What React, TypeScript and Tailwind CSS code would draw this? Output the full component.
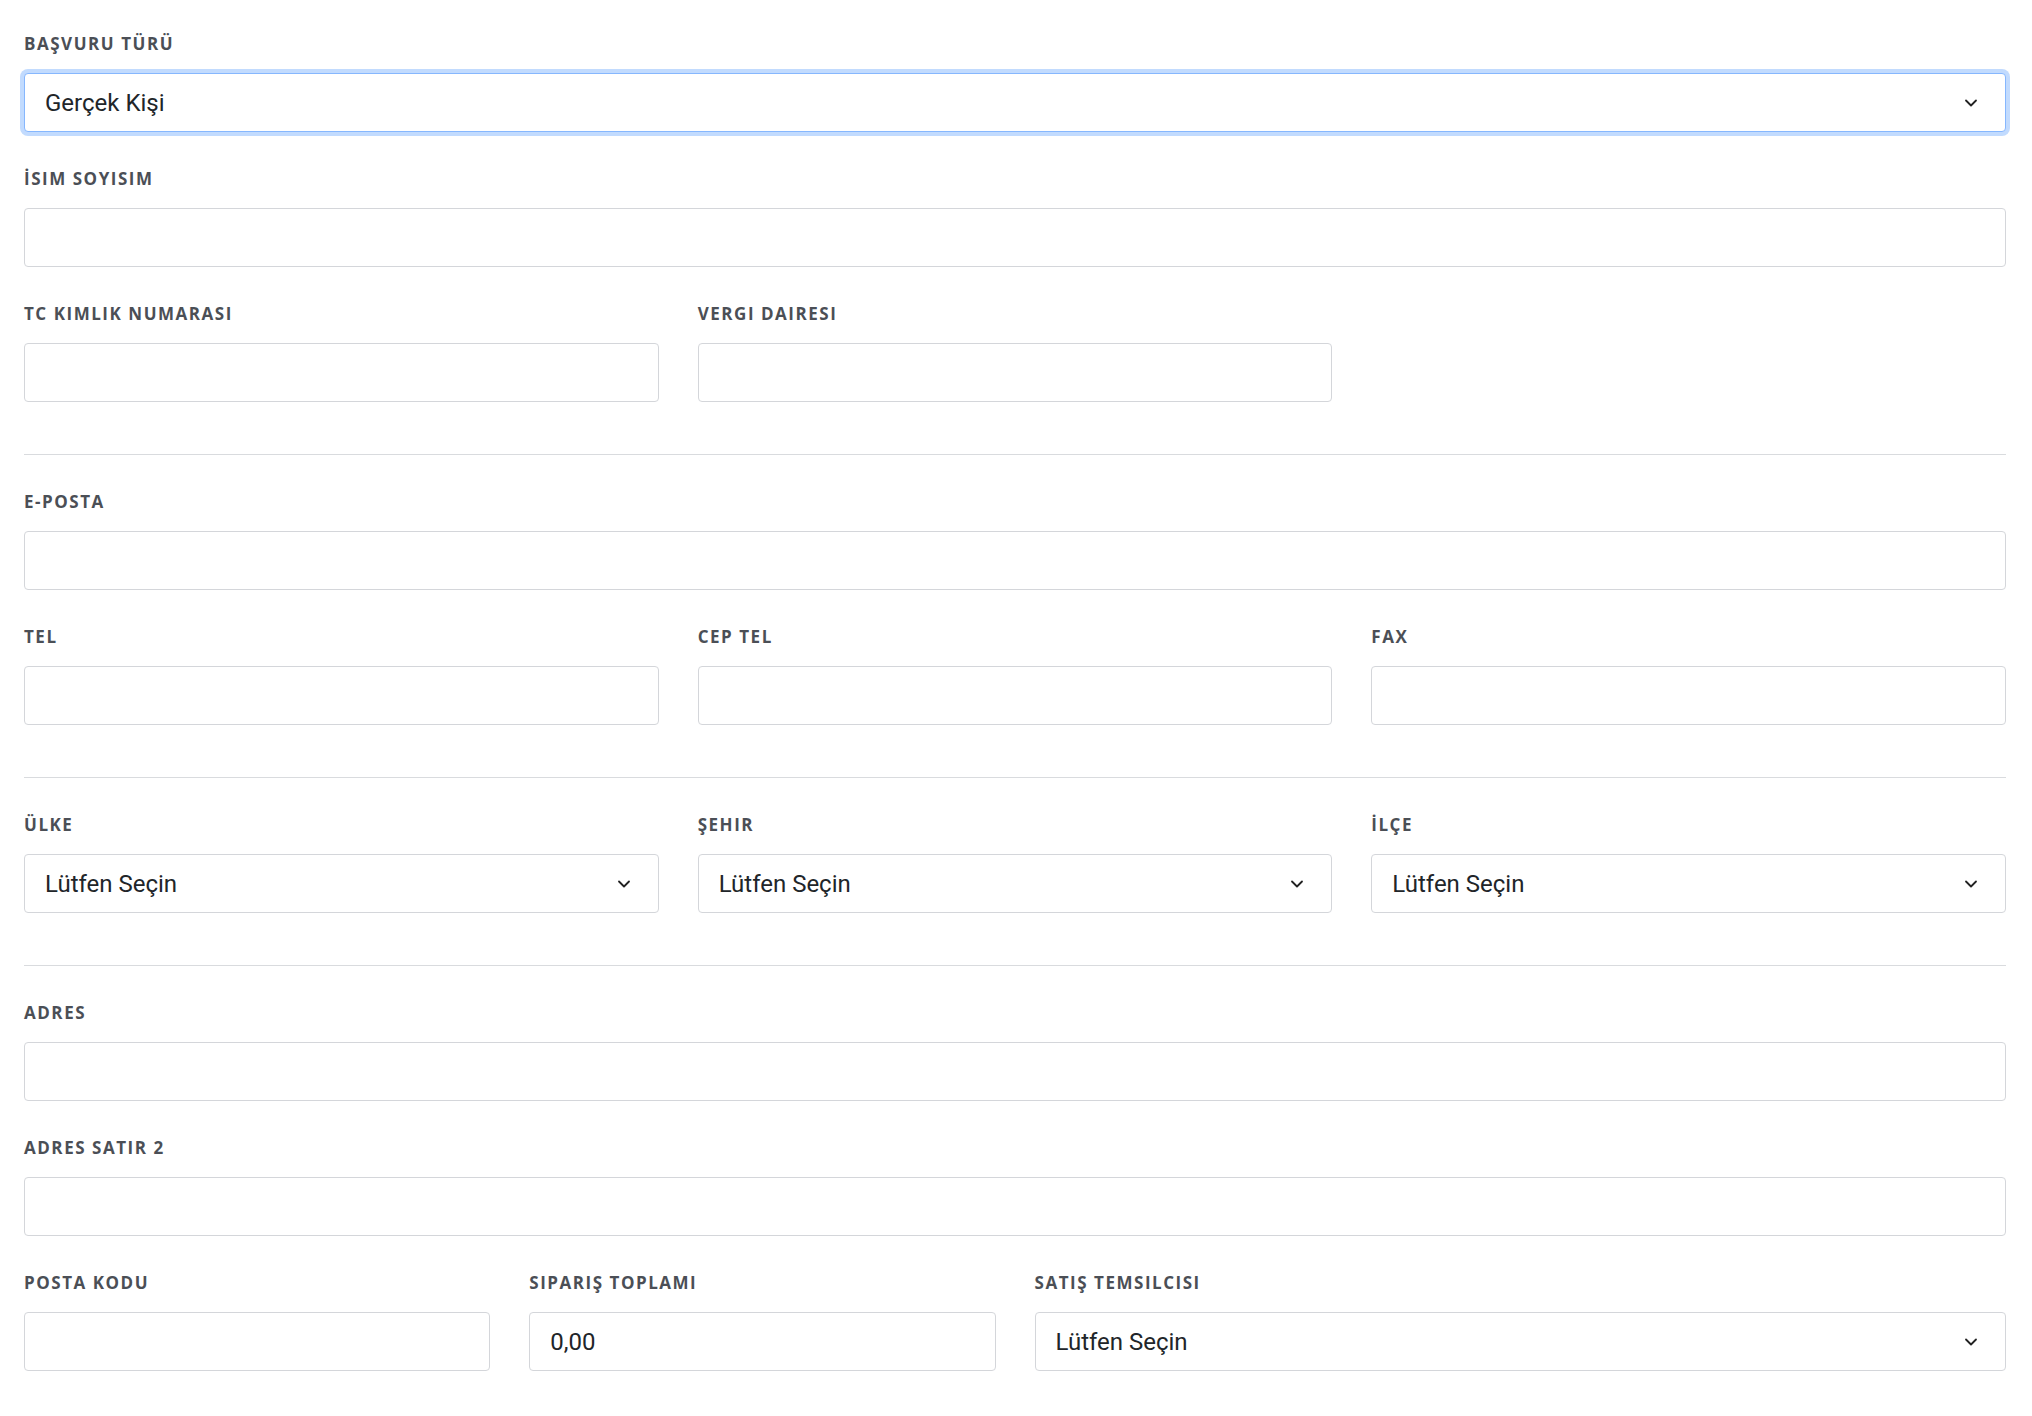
import React from "react";

const Label = ({ children }: { children: React.ReactNode }) => (
  <div className="text-[17px] font-bold tracking-[0.09em] text-[#4b4f56] leading-[20px] mb-[19px] uppercase" style={{ fontFamily: '"Open Sans", sans-serif' }}>
    {children}
  </div>
);

const Chevron = () => (
  <svg width="20" height="20" viewBox="0 0 24 24" fill="none" stroke="#222" strokeWidth="2.2" strokeLinecap="round" strokeLinejoin="round">
    <path d="M6 9l6 6 6-6" />
  </svg>
);

const Input = ({ value }: { value?: string }) => (
  <div className="h-[59px] border border-[#d4d6da] rounded-[4px] bg-white flex items-center px-[20px] text-[24px] text-[#212529]" style={{ fontFamily: "Roboto, sans-serif" }}>
    {value}
  </div>
);

const Select = ({ value, focus }: { value: string; focus?: boolean }) => (
  <div
    className={
      "h-[59px] rounded-[4px] bg-white flex items-center justify-between pl-[20px] pr-[24px] text-[24px] text-[#212529] " +
      (focus ? "border border-[#86b7fe] ring-4 ring-[#c2dbfe]" : "border border-[#d4d6da]")
    }
    style={{ fontFamily: "Roboto, sans-serif" }}
  >
    <span>{value}</span>
    <Chevron />
  </div>
);

const Field = ({ label, children, span }: { label: string; children: React.ReactNode; span: string }) => (
  <div className={span + " mb-[37px]"}>
    <Label>{label}</Label>
    {children}
  </div>
);

const Hr = () => <div className="col-span-12 h-px bg-[#d9dbde] mt-[15px] mb-[37px]" />;

export default function App() {
  return (
    <div className="bg-white w-[2032px] h-[1416px] pl-[24px] pr-[26px] pt-[34px]">
      <div className="grid grid-cols-12 gap-x-[39px]">
        <Field label="Başvuru Türü" span="col-span-12"><Select value="Gerçek Kişi" focus /></Field>
        <Field label="İsim Soyisim" span="col-span-12"><Input /></Field>
        <Field label="TC Kimlik Numarası" span="col-span-4"><Input /></Field>
        <Field label="Vergi Dairesi" span="col-span-4"><Input /></Field>
        <Hr />
        <Field label="E-Posta" span="col-span-12"><Input /></Field>
        <Field label="Tel" span="col-span-4"><Input /></Field>
        <Field label="Cep Tel" span="col-span-4"><Input /></Field>
        <Field label="Fax" span="col-span-4"><Input /></Field>
        <Hr />
        <Field label="Ülke" span="col-span-4"><Select value="Lütfen Seçin" /></Field>
        <Field label="Şehir" span="col-span-4"><Select value="Lütfen Seçin" /></Field>
        <Field label="İlçe" span="col-span-4"><Select value="Lütfen Seçin" /></Field>
        <Hr />
        <Field label="Adres" span="col-span-12"><Input /></Field>
        <Field label="Adres Satır 2" span="col-span-12"><Input /></Field>
        <Field label="Posta Kodu" span="col-span-3"><Input /></Field>
        <Field label="Sipariş Toplamı" span="col-span-3"><Input value="0,00" /></Field>
        <Field label="Satış Temsilcisi" span="col-span-6"><Select value="Lütfen Seçin" /></Field>
      </div>
    </div>
  );
}
